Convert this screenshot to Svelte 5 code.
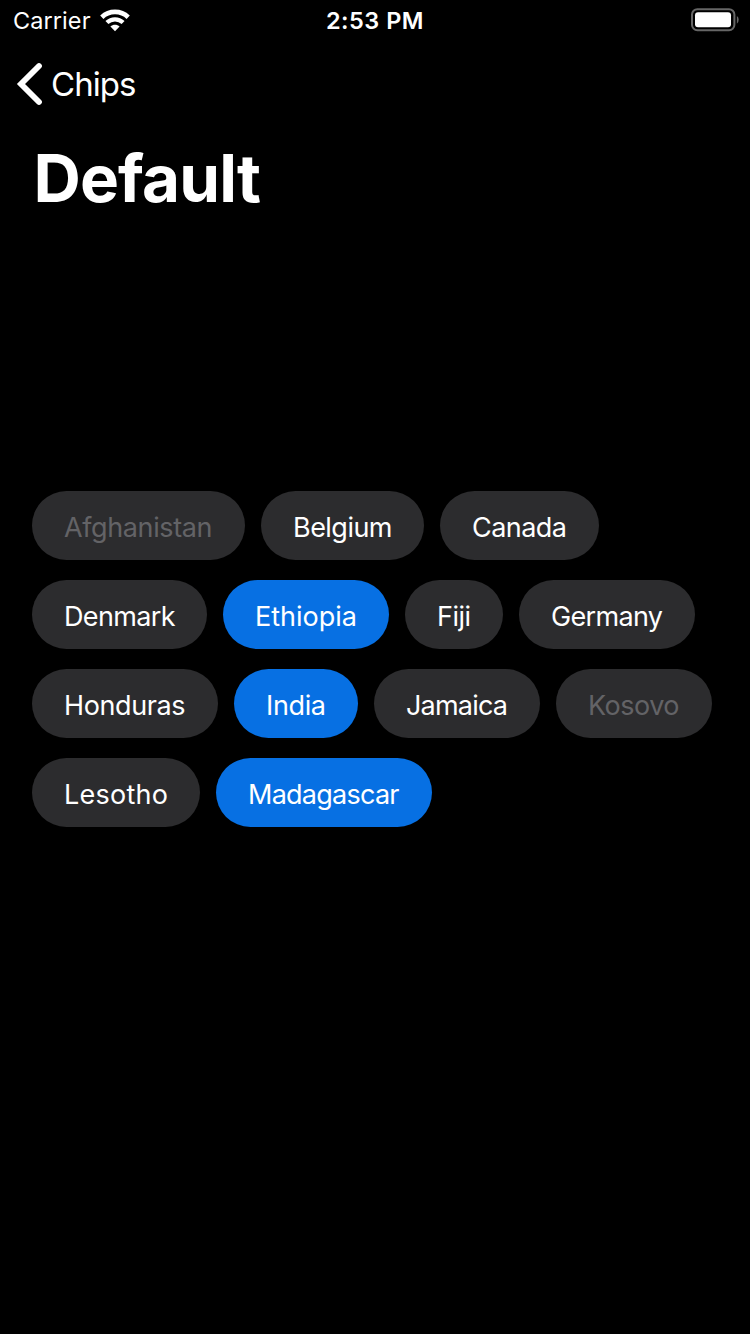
<script>
  const rows = [
    [
      { name: 'Afghanistan', width: 213, text: 147, disabled: true },
      { name: 'Belgium', width: 163, text: 98 },
      { name: 'Canada', width: 159, text: 93.5 }
    ],
    [
      { name: 'Denmark', width: 175, text: 110 },
      { name: 'Ethiopia', width: 166, text: 100.5, selected: true },
      { name: 'Fiji', width: 98, text: 32.5 },
      { name: 'Germany', width: 176, text: 110.5 }
    ],
    [
      { name: 'Honduras', width: 186, text: 120 },
      { name: 'India', width: 124, text: 58.5, selected: true },
      { name: 'Jamaica', width: 166, text: 100.5 },
      { name: 'Kosovo', width: 156, text: 90, disabled: true }
    ],
    [
      { name: 'Lesotho', width: 168, text: 102.5 },
      { name: 'Madagascar', width: 216, text: 150, selected: true }
    ]
  ];

  // Spreads the letters so the label fills the given width.
  function track(node, width) {
    const natural = node.getBoundingClientRect().width;
    const gaps = node.textContent.length - 1;
    node.style.letterSpacing = `${(width + 1.5 - natural) / gaps}px`;
  }
</script>

<div class="screen">
  <header class="status">
    <div class="carrier">
      <span use:track={76}>Carrier</span>
      <svg width="30" height="23" viewBox="0 0 30 23" fill="none" stroke="#fff">
        <path d="M1.8 8.2C9.2 1.2 20.8 1.2 28.2 8.2" stroke-width="4.7" />
        <path d="M6.9 13.5C11.5 9.2 18.5 9.2 23.1 13.5" stroke-width="4.3" />
        <path d="M15 22.2L10.4 17.6C13 15.2 17 15.2 19.6 17.6Z" fill="#fff" stroke="none" />
      </svg>
    </div>
    <div class="time"><span use:track={96}>2:53 PM</span></div>
    <div class="battery">
      <svg width="50" height="24" viewBox="0 0 50 24">
        <rect x="2" y="1.2" width="42.4" height="21" rx="5.4" fill="none" stroke="#666" stroke-width="2" />
        <rect x="5" y="4.2" width="36" height="15" rx="3" fill="#fff" />
        <path d="M46.9 8Q48.7 9.3 48.7 11.8T46.9 15.7Z" fill="#666" />
      </svg>
    </div>
  </header>

  <nav>
    <svg width="28" height="44" viewBox="0 0 28 44" fill="none" stroke="#fff" stroke-width="5.8" stroke-linecap="round">
      <path d="M24 4L6 22L24 40" />
    </svg>
    <span use:track={84}>Chips</span>
  </nav>

  <h1><span use:track={226}>Default</span></h1>

  <main>
    {#each rows as row}
      <div class="row">
        {#each row as chip}
          <button class="chip" class:selected={chip.selected} disabled={chip.disabled} style:width="{chip.width}px">
            <span use:track={chip.text}>{chip.name}</span>
          </button>
        {/each}
      </div>
    {/each}
  </main>
</div>

<style>
  :global(body) {
    background: #000;
  }
  .screen {
    box-sizing: border-box;
    height: 1334px;
    background: #000;
    color: #fff;
    font-family: Inter, 'Liberation Sans', sans-serif;
    overflow: hidden;
  }
  span {
    white-space: nowrap;
  }
  .status {
    display: grid;
    grid-template-columns: 1fr auto 1fr;
    height: 41px;
    font-size: 23.5px;
    line-height: 41px;
  }
  .carrier {
    display: flex;
    padding-left: 13px;
  }
  .carrier svg {
    margin: 8.5px 0 0 9px;
  }
  .time {
    font-weight: 600;
  }
  .battery {
    display: flex;
    justify-content: flex-end;
    padding-top: 7.5px;
    margin-right: 10.5px;
  }
  nav {
    display: flex;
    align-items: center;
    height: 86px;
    padding-left: 15px;
    font-size: 33px;
  }
  nav svg {
    margin-right: 8px;
  }
  h1 {
    box-sizing: border-box;
    margin: 0;
    padding: 12px 0 0 33.5px;
    height: 364px;
    font-size: 65.5px;
    line-height: 80px;
    font-weight: 650;
  }
  main {
    display: flex;
    flex-direction: column;
    gap: 20px;
    padding-left: 32px;
  }
  .row {
    display: flex;
    gap: 16px;
  }
  .chip {
    box-sizing: border-box;
    display: flex;
    flex: none;
    height: 69px;
    padding: 4px 0 0 32px;
    align-items: center;
    border: 0;
    border-radius: 34.5px;
    background: #2c2c2e;
    color: #fff;
    font: 400 27px Inter, 'Liberation Sans', sans-serif;
  }
  .chip.selected {
    background: #0770e3;
  }
  .chip:disabled {
    color: #636366;
  }
</style>
